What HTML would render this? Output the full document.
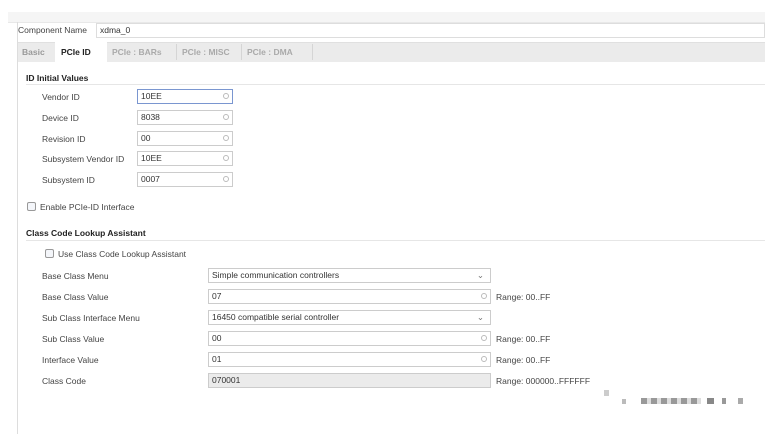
<!DOCTYPE html><html><head><style>
body{margin:0;width:777px;height:434px;background:#fff;font-family:"Liberation Sans",sans-serif;font-size:9px;color:#333;position:relative;overflow:hidden}
.a{position:absolute}
.inp{position:absolute;height:15px;border:1px solid #ccc;background:#fff;box-sizing:border-box;padding-left:3px;line-height:13px;font-size:8.5px}
.dot{position:absolute;right:3px;top:3px;width:6px;height:6px;border:1px solid #bbb;border-radius:50%;box-sizing:border-box}
.lb{position:absolute;font-size:8.5px;color:#444}
.b{font-weight:bold;color:#222}
.cb{position:absolute;width:9px;height:9px;border:1px solid #999;border-radius:2px;background:#f4f6fa;box-sizing:border-box}
</style></head><body>
<div class="a" style="left:8px;top:12px;width:757px;height:10px;background:#f5f5f5;border-bottom:1px solid #e8e8e8"></div>
<div class="a" style="left:17px;top:22px;width:1px;height:412px;background:#ddd"></div>
<div class="lb" style="left:18px;top:25px">Component Name</div>
<div class="inp" style="left:96px;top:23px;width:669px;border-color:#ddd">xdma_0</div>
<div class="a" style="left:18px;top:42px;width:747px;height:19px;background:#ebebeb;border-top:1px solid #e0e0e0"></div>
<div class="lb" style="left:22px;top:47px;color:#999;font-weight:bold">Basic</div>
<div class="a" style="left:55px;top:42px;width:52px;height:20px;background:#fff"></div>
<div class="lb b" style="left:61px;top:47px">PCIe ID</div>
<div class="lb" style="left:112px;top:47px;color:#aaa;font-weight:bold">PCIe : BARs</div>
<div class="a" style="left:176px;top:44px;width:1px;height:16px;background:#d5d5d5"></div>
<div class="lb" style="left:182px;top:47px;color:#aaa;font-weight:bold">PCIe : MISC</div>
<div class="a" style="left:241px;top:44px;width:1px;height:16px;background:#d5d5d5"></div>
<div class="lb" style="left:247px;top:47px;color:#aaa;font-weight:bold">PCIe : DMA</div>
<div class="a" style="left:312px;top:44px;width:1px;height:16px;background:#d5d5d5"></div>
<div class="lb b" style="left:26px;top:73px">ID Initial Values</div>
<div class="a" style="left:26px;top:84px;width:739px;height:1px;background:#e6e6e6"></div>
<div class="lb" style="left:42px;top:92px">Vendor ID</div><div class="inp" style="left:137px;top:89px;width:96px;border-color:#7a96d0">10EE<div class="dot"></div></div>
<div class="lb" style="left:42px;top:113px">Device ID</div><div class="inp" style="left:137px;top:110px;width:96px">8038<div class="dot"></div></div>
<div class="lb" style="left:42px;top:134px">Revision ID</div><div class="inp" style="left:137px;top:131px;width:96px">00<div class="dot"></div></div>
<div class="lb" style="left:42px;top:154px">Subsystem Vendor ID</div><div class="inp" style="left:137px;top:151px;width:96px">10EE<div class="dot"></div></div>
<div class="lb" style="left:42px;top:175px">Subsystem ID</div><div class="inp" style="left:137px;top:172px;width:96px">0007<div class="dot"></div></div>
<div class="cb" style="left:27px;top:202px"></div><div class="lb" style="left:40px;top:202px">Enable PCIe-ID Interface</div>
<div class="lb b" style="left:26px;top:228px">Class Code Lookup Assistant</div>
<div class="a" style="left:26px;top:240px;width:739px;height:1px;background:#e6e6e6"></div>
<div class="cb" style="left:45px;top:249px"></div><div class="lb" style="left:58px;top:249px">Use Class Code Lookup Assistant</div>
<div class="lb" style="left:42px;top:271px">Base Class Menu</div><div class="inp" style="left:208px;top:268px;width:283px">Simple communication controllers<span style="position:absolute;right:6px;color:#777">&#8964;</span></div>
<div class="lb" style="left:42px;top:292px">Base Class Value</div><div class="inp" style="left:208px;top:289px;width:283px">07<div class="dot"></div></div><div class="lb" style="left:496px;top:292px">Range: 00..FF</div>
<div class="lb" style="left:42px;top:313px">Sub Class Interface Menu</div><div class="inp" style="left:208px;top:310px;width:283px">16450 compatible serial controller<span style="position:absolute;right:6px;color:#777">&#8964;</span></div>
<div class="lb" style="left:42px;top:334px">Sub Class Value</div><div class="inp" style="left:208px;top:331px;width:283px">00<div class="dot"></div></div><div class="lb" style="left:496px;top:334px">Range: 00..FF</div>
<div class="lb" style="left:42px;top:355px">Interface Value</div><div class="inp" style="left:208px;top:352px;width:283px">01<div class="dot"></div></div><div class="lb" style="left:496px;top:355px">Range: 00..FF</div>
<div class="lb" style="left:42px;top:376px">Class Code</div><div class="inp" style="left:208px;top:373px;width:283px;background:#ebebeb">070001</div><div class="lb" style="left:496px;top:376px">Range: 000000..FFFFFF</div>
<div class="a" style="left:604px;top:390px;width:5px;height:6px;background:#ccc"></div>
<div class="a" style="left:622px;top:399px;width:4px;height:5px;background:#bbb"></div>
<div class="a" style="left:641px;top:398px;width:60px;height:6px;background:repeating-linear-gradient(90deg,#999 0 6px,#ddd 6px 10px)"></div>
<div class="a" style="left:707px;top:398px;width:7px;height:6px;background:#888"></div>
<div class="a" style="left:722px;top:398px;width:4px;height:6px;background:#999"></div>
<div class="a" style="left:738px;top:398px;width:5px;height:6px;background:#aaa"></div>
</body></html>
